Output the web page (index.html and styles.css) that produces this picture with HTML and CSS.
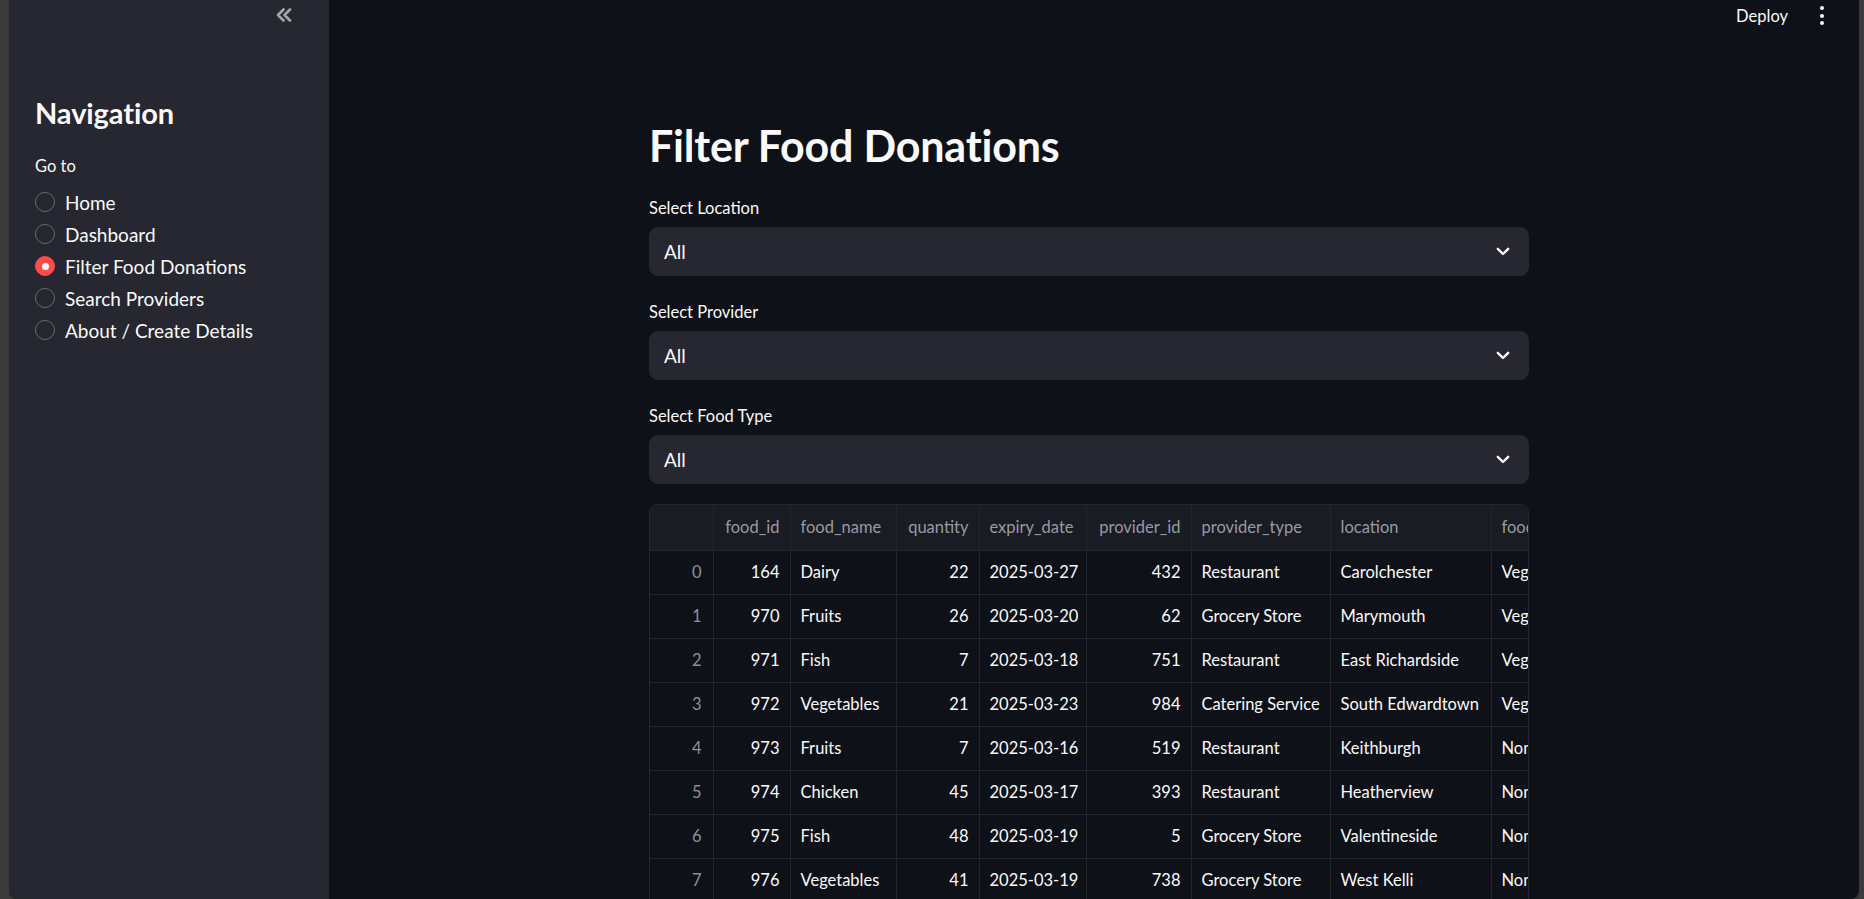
FILE: index.html
```html
<!DOCTYPE html>
<html lang="en">
<head>
<meta charset="utf-8">
<title>Filter Food Donations</title>
<link rel="stylesheet" href="styles.css">
</head>
<body>
<div class="window">
  <aside class="sidebar">
    <div class="side-top">
      <button class="collapse" aria-label="Collapse sidebar">
        <svg width="18" height="14" viewBox="0 0 18 14"><path d="M8.5 1.5 L3 7 L8.5 12.5 M15 1.5 L9.5 7 L15 12.5" fill="none" stroke="currentColor" stroke-width="2.6" stroke-linecap="round" stroke-linejoin="round"/></svg>
      </button>
    </div>
    <div class="side-content">
      <h2 class="side-title">Navigation</h2>
      <div class="side-label">Go to</div>
      <div class="radios">
        <div class="radio"><span class="dot"></span><span>Home</span></div>
        <div class="radio"><span class="dot"></span><span>Dashboard</span></div>
        <div class="radio checked"><span class="dot"></span><span>Filter Food Donations</span></div>
        <div class="radio"><span class="dot"></span><span>Search Providers</span></div>
        <div class="radio"><span class="dot"></span><span>About / Create Details</span></div>
      </div>
    </div>
  </aside>
  <main class="main">
    <header class="topbar">
      <span class="deploy">Deploy</span>
      <span class="kebab"><i></i><i></i><i></i></span>
    </header>
    <div class="block">
      <h1 class="title">Filter Food Donations</h1>
      <div class="field">
        <div class="field-label">Select Location</div>
        <div class="select"><span>All</span><svg class="chev" width="14" height="9" viewBox="0 0 14 9"><path d="M1.8 1.8 L7 7 L12.2 1.8" fill="none" stroke="currentColor" stroke-width="2.4" stroke-linecap="round" stroke-linejoin="round"/></svg></div>
      </div>
      <div class="field">
        <div class="field-label">Select Provider</div>
        <div class="select"><span>All</span><svg class="chev" width="14" height="9" viewBox="0 0 14 9"><path d="M1.8 1.8 L7 7 L12.2 1.8" fill="none" stroke="currentColor" stroke-width="2.4" stroke-linecap="round" stroke-linejoin="round"/></svg></div>
      </div>
      <div class="field">
        <div class="field-label">Select Food Type</div>
        <div class="select"><span>All</span><svg class="chev" width="14" height="9" viewBox="0 0 14 9"><path d="M1.8 1.8 L7 7 L12.2 1.8" fill="none" stroke="currentColor" stroke-width="2.4" stroke-linecap="round" stroke-linejoin="round"/></svg></div>
      </div>
      <div class="table-wrap">
        <table class="grid">
          <colgroup>
            <col class="c-idx"><col class="c-fid"><col class="c-fname"><col class="c-qty"><col class="c-exp"><col class="c-pid"><col class="c-ptype"><col class="c-loc"><col class="c-ftype"><col class="c-meal">
          </colgroup>
          <thead>
            <tr><th></th><th class="num">food_id</th><th>food_name</th><th class="num">quantity</th><th>expiry_date</th><th class="num">provider_id</th><th>provider_type</th><th>location</th><th>food_type</th><th>meal_type</th></tr>
          </thead>
          <tbody>
            <tr><td class="idx">0</td><td class="num">164</td><td>Dairy</td><td class="num">22</td><td>2025-03-27</td><td class="num">432</td><td>Restaurant</td><td>Carolchester</td><td>Vegetarian</td><td>Dinner</td></tr>
            <tr><td class="idx">1</td><td class="num">970</td><td>Fruits</td><td class="num">26</td><td>2025-03-20</td><td class="num">62</td><td>Grocery Store</td><td>Marymouth</td><td>Vegetarian</td><td>Lunch</td></tr>
            <tr><td class="idx">2</td><td class="num">971</td><td>Fish</td><td class="num">7</td><td>2025-03-18</td><td class="num">751</td><td>Restaurant</td><td>East Richardside</td><td>Vegetarian</td><td>Snacks</td></tr>
            <tr><td class="idx">3</td><td class="num">972</td><td>Vegetables</td><td class="num">21</td><td>2025-03-23</td><td class="num">984</td><td>Catering Service</td><td>South Edwardtown</td><td>Vegetarian</td><td>Breakfast</td></tr>
            <tr><td class="idx">4</td><td class="num">973</td><td>Fruits</td><td class="num">7</td><td>2025-03-16</td><td class="num">519</td><td>Restaurant</td><td>Keithburgh</td><td>Non-Vegetarian</td><td>Dinner</td></tr>
            <tr><td class="idx">5</td><td class="num">974</td><td>Chicken</td><td class="num">45</td><td>2025-03-17</td><td class="num">393</td><td>Restaurant</td><td>Heatherview</td><td>Non-Vegetarian</td><td>Lunch</td></tr>
            <tr><td class="idx">6</td><td class="num">975</td><td>Fish</td><td class="num">48</td><td>2025-03-19</td><td class="num">5</td><td>Grocery Store</td><td>Valentineside</td><td>Non-Vegetarian</td><td>Snacks</td></tr>
            <tr><td class="idx">7</td><td class="num">976</td><td>Vegetables</td><td class="num">41</td><td>2025-03-19</td><td class="num">738</td><td>Grocery Store</td><td>West Kelli</td><td>Non-Vegetarian</td><td>Dinner</td></tr>
            <tr><td class="idx">8</td><td class="num">977</td><td>Bread</td><td class="num">12</td><td>2025-03-21</td><td class="num">211</td><td>Supermarket</td><td>Lake Andrew</td><td>Vegan</td><td>Breakfast</td></tr>
          </tbody>
        </table>
      </div>
    </div>
  </main>
</div>
</body>
</html>
```
FILE: styles.css
```css
* { box-sizing: border-box; }
html, body {
  margin: 0;
  padding: 0;
  height: 100%;
  overflow: hidden;
}
body {
  background: #3b3b3a;
  font-family: Lato, "Noto Sans", sans-serif;
  color: #fafafa;
}
.window {
  display: flex;
  height: 899px;
  margin-left: 9px;
  margin-right: 5px;
  border-radius: 0 0 8px 8px;
  overflow: hidden;
  background: #0e1117;
}
.sidebar {
  width: 320px;
  flex: none;
  background: #262730;
  display: flex;
  flex-direction: column;
}
.side-top {
  height: 28px;
  display: flex;
  justify-content: flex-end;
  align-items: center;
  padding-right: 36px;
}
.collapse {
  background: none;
  border: 0;
  padding: 0;
  color: #a4a6ae;
  display: flex;
  margin-top: 1px;
}
.side-content {
  padding: 67px 26px 0 26px;
}
.side-title {
  margin: 0;
  font-size: 29px;
  font-weight: 700;
  line-height: 35px;
  letter-spacing: -0.1px;
}
.side-label {
  margin-top: 26px;
  font-size: 16.5px;
  line-height: 20px;
}
.radios {
  margin-top: 10px;
  display: flex;
  flex-direction: column;
}
.radio {
  height: 32px;
  display: flex;
  align-items: center;
  gap: 10px;
  font-size: 19px;
}
.dot {
  width: 20px;
  height: 20px;
  border-radius: 50%;
  border: 1.6px solid #6a6c74;
  flex: none;
  display: flex;
  align-items: center;
  justify-content: center;
}
.radio.checked .dot {
  background: #ff4b4b;
  border-color: #ff4b4b;
}
.radio.checked .dot::after {
  content: "";
  width: 7px;
  height: 7px;
  border-radius: 50%;
  background: #fafafa;
}
.main {
  flex: 1;
  min-width: 0;
  display: flex;
  flex-direction: column;
}
.topbar {
  height: 28px;
  flex: none;
  display: flex;
  justify-content: flex-end;
  align-items: center;
  padding-right: 35px;
  padding-top: 4px;
  gap: 32px;
}
.deploy {
  font-size: 16.5px;
}
.kebab {
  display: flex;
  flex-direction: column;
  gap: 3.5px;
  margin-top: -1px;
}
.kebab i {
  display: block;
  width: 4px;
  height: 4px;
  border-radius: 50%;
  background: #fafafa;
}
.block {
  width: 880px;
  margin-left: 320px;
  padding-top: 92px;
}
.title {
  margin: 0;
  font-size: 43px;
  font-weight: 700;
  line-height: 52px;
  letter-spacing: -0.2px;
}
.field {
  margin-top: 26px;
}
.field-label {
  font-size: 16.5px;
  line-height: 20px;
}
.select {
  margin-top: 9px;
  height: 49px;
  background: #262730;
  border-radius: 9px;
  display: flex;
  align-items: center;
  justify-content: space-between;
  padding: 0 19px 0 15px;
  font-size: 19px;
}
.chev { color: #fafafa; }
.table-wrap {
  margin-top: 20px;
  border: 1px solid #262830;
  border-radius: 9px 9px 0 0;
  overflow: hidden;
  width: 880px;
}
.grid {
  border-collapse: collapse;
  table-layout: fixed;
  width: 1160px;
  font-size: 16.5px;
}
.c-idx { width: 63px; }
.c-fid { width: 77px; }
.c-fname { width: 106px; }
.c-qty { width: 83px; }
.c-exp { width: 107px; }
.c-pid { width: 105px; }
.c-ptype { width: 139px; }
.c-loc { width: 161px; }
.c-ftype { width: 160px; }
.c-meal { width: 159px; }
.grid th, .grid td {
  padding: 0 10px 0 10px;
  text-align: left;
  white-space: nowrap;
  overflow: hidden;
  border-right: 1px solid #24262d;
  border-bottom: 1px solid #24262d;
}
.grid th {
  height: 45px;
  background: #1a1c23;
  font-weight: 400;
  color: #989aa1;
}
.grid td {
  height: 44px;
  color: #fafafa;
}
.grid .num { text-align: right; }
.grid td.idx {
  text-align: right;
  color: #8e9097;
  padding-right: 11px;
}
```
